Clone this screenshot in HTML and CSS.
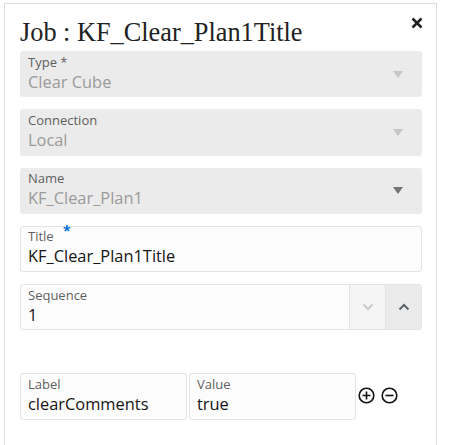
FILE: index.html
```html
<!DOCTYPE html>
<html>
<head>
<meta charset="utf-8">
<link rel="stylesheet" href="styles.css">
</head>
<body>
<div class="panel">
  <div class="header">
    <h1 class="title">Job : KF_Clear_Plan1Title</h1>
    <button class="close" aria-label="Close">
      <svg width="12" height="12" viewBox="0 0 12 12"><path d="M1.5 1.5 L10.5 10.5 M10.5 1.5 L1.5 10.5" stroke="#222" stroke-width="2.6" stroke-linecap="butt"/></svg>
    </button>
  </div>

  <div class="field select disabled">
    <div class="field-body">
      <div class="label">Type *</div>
      <div class="value">Clear Cube</div>
    </div>
    <span class="caret"></span>
  </div>

  <div class="field select disabled">
    <div class="field-body">
      <div class="label">Connection</div>
      <div class="value">Local</div>
    </div>
    <span class="caret"></span>
  </div>

  <div class="field select readonly">
    <div class="field-body">
      <div class="label">Name</div>
      <div class="value">KF_Clear_Plan1</div>
    </div>
    <span class="caret dark"></span>
  </div>

  <div class="field text">
    <div class="field-body">
      <div class="label">Title <span class="req">*</span></div>
      <div class="value">KF_Clear_Plan1Title</div>
    </div>
  </div>

  <div class="field text number">
    <div class="field-body">
      <div class="label">Sequence</div>
      <div class="value">1</div>
    </div>
    <div class="step down">
      <svg width="12" height="8" viewBox="0 0 12 8"><path d="M1.5 1.5 L6 6 L10.5 1.5" fill="none" stroke="#c9c9c9" stroke-width="2"/></svg>
    </div>
    <div class="step up">
      <svg width="12" height="8" viewBox="0 0 12 8"><path d="M1.5 6.5 L6 2 L10.5 6.5" fill="none" stroke="#5f6368" stroke-width="2"/></svg>
    </div>
  </div>

  <div class="kv-row">
    <div class="field text kv">
      <div class="field-body">
        <div class="label">Label</div>
        <div class="value">clearComments</div>
      </div>
    </div>
    <div class="field text kv">
      <div class="field-body">
        <div class="label">Value</div>
        <div class="value">true</div>
      </div>
    </div>
    <div class="kv-actions">
      <svg width="17" height="17" viewBox="0 0 17 17"><circle cx="8.5" cy="8.5" r="7.3" fill="none" stroke="#111" stroke-width="1.6"/><path d="M8.5 4.5 V12.5 M4.5 8.5 H12.5" stroke="#111" stroke-width="1.6"/></svg>
      <svg width="17" height="17" viewBox="0 0 17 17"><circle cx="8.5" cy="8.5" r="7.3" fill="none" stroke="#111" stroke-width="1.6"/><path d="M4.5 8.5 H12.5" stroke="#111" stroke-width="1.6"/></svg>
    </div>
  </div>
</div>
</body>
</html>
```

FILE: styles.css
```css
html, body {
  margin: 0;
  padding: 0;
  background: #fff;
}
body {
  padding: 3px 0 0 4px;
  font-family: "Open Sans", "Noto Sans", sans-serif;
}
.panel {
  box-sizing: border-box;
  width: 433px;
  height: 460px;
  border: 1px solid #dcdcdc;
  border-bottom: none;
  padding: 0 14px 0 15px;
}
.header {
  display: flex;
  justify-content: space-between;
  align-items: flex-start;
  height: 47px;
}
.title {
  margin: 14px 0 0 0;
  font-family: "Liberation Serif", "DejaVu Serif", serif;
  font-weight: normal;
  font-size: 26.3px;
  line-height: 30px;
  color: #222;
}
.close {
  border: none;
  background: none;
  padding: 0;
  margin: 13px -1px 0 0;
  width: 12px;
  height: 12px;
  display: flex;
}
.field {
  box-sizing: border-box;
  display: flex;
  align-items: stretch;
  height: 46.3px;
  border-radius: 3px;
  margin-bottom: 12px;
}
.field-body {
  flex: 1;
  padding: 1.5px 8px 0 8px;
  min-width: 0;
}
.label {
  font-size: 13px;
  line-height: 18px;
  color: #5f5f5f;
  white-space: nowrap;
}
.value {
  font-size: 16.4px;
  line-height: 22.5px;
  color: #161513;
  white-space: nowrap;
}
.select {
  background: #ebebeb;
}
.select .value {
  color: #9a9a9a;
}
.caret {
  align-self: center;
  width: 0;
  height: 0;
  border-left: 5.5px solid transparent;
  border-right: 5.5px solid transparent;
  border-top: 7px solid #c6c6c6;
  margin: 0 19px 0 0;
}
.caret.dark {
  border-top-color: #757575;
}
.text {
  background: #fcfcfc;
  border: 1px solid #e3e3e3;
}
.text .field-body {
  padding: 0.5px 7px 0 7px;
}
.req {
  color: #0572ce;
  font-weight: bold;
  font-size: 14px;
  vertical-align: 5px;
  margin-left: 6px;
  line-height: 0;
}
.number {
  overflow: hidden;
}
.step {
  width: 35px;
  display: flex;
  align-items: center;
  justify-content: center;
  border-left: 1px solid #e3e3e3;
}
.step.down {
  background: #f5f5f5;
}
.step.up {
  background: #ebebeb;
}
.kv-row {
  display: flex;
  align-items: center;
  margin-top: 43px;
}
.kv-row .kv {
  width: 167px;
  margin-bottom: 0;
  margin-right: 2px;
}
.kv-actions {
  display: flex;
  gap: 6px;
  margin-left: 0;
  padding-bottom: 3px;
}
```
